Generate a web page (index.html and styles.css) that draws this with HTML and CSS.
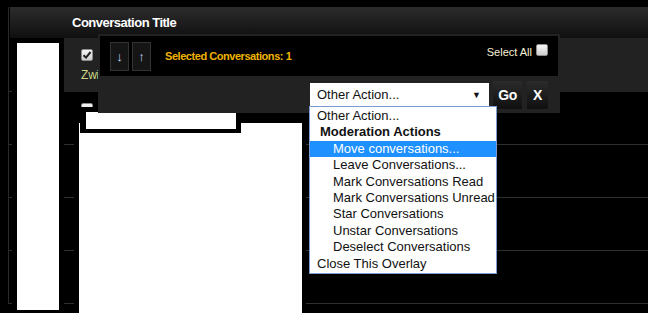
FILE: index.html
```html
<!DOCTYPE html>
<html lang="en">
<head>
    <meta charset="UTF-8">
    <title>Conversations</title>
    <link rel="stylesheet" href="styles.css">
</head>
<body>
    <div class="list">
        <div class="list-head">Conversation Title</div>

        <div class="row row-selected">
            <div class="cell-side"></div>
            <div class="cell-main">
                <span class="check">
                    <svg width="10" height="10" viewBox="0 0 10 10"><path d="M1.5 5.2 L4 7.6 L8.6 2" fill="none" stroke="#222" stroke-width="2"/></svg>
                </span>
                <div class="conv-title">Zwi</div>
            </div>
        </div>
        <div class="row">
            <div class="cell-side"></div>
            <div class="cell-main"><span class="check"></span></div>
        </div>
        <div class="row">
            <div class="cell-side"></div>
            <div class="cell-main"><span class="check"></span></div>
        </div>
        <div class="row">
            <div class="cell-side"></div>
            <div class="cell-main"><span class="check"></span></div>
        </div>
        <div class="row">
            <div class="cell-side"></div>
            <div class="cell-main"><span class="check"></span></div>
        </div>
    </div>

    <!-- redacted parts of the capture -->
    <div class="redact redact-side"></div>
    <div class="redact redact-main"></div>
    <div class="redact redact-bar"></div>

    <!-- inline moderation overlay -->
    <div class="inline-mod">
        <div class="mod-top">
            <button class="sort-btn">&darr;</button>
            <button class="sort-btn">&uarr;</button>
            <span class="mod-count">Selected Conversations: 1</span>
            <label class="select-all">
                <span>Select All</span>
                <span class="check"></span>
            </label>
        </div>
        <div class="mod-bottom">
            <div class="action-select">
                <span>Other Action...</span>
                <span class="caret">&#9660;</span>
            </div>
            <button class="mod-btn">Go</button>
            <button class="mod-btn mod-close">X</button>
        </div>
    </div>

    <div class="action-list">
        <div class="opt">Other Action...</div>
        <div class="opt-group">Moderation Actions</div>
        <div class="opt opt-sub is-active">Move conversations...</div>
        <div class="opt opt-sub">Leave Conversations...</div>
        <div class="opt opt-sub">Mark Conversations Read</div>
        <div class="opt opt-sub">Mark Conversations Unread</div>
        <div class="opt opt-sub">Star Conversations</div>
        <div class="opt opt-sub">Unstar Conversations</div>
        <div class="opt opt-sub">Deselect Conversations</div>
        <div class="opt">Close This Overlay</div>
    </div>
</body>
</html>
```

FILE: styles.css
```css
* {
    margin: 0;
    padding: 0;
    box-sizing: border-box;
}

body {
    font-family: 'Liberation Sans', Arial, sans-serif;
    background-color: #000;
    width: 648px;
    height: 313px;
    overflow: hidden;
    position: relative;
}

button {
    font-family: inherit;
    border: none;
    cursor: pointer;
}

/* Список */
.list {
    margin: 7px 0 0 8px;
    border-left: 1px solid #2a2a2a;
}

.list-head {
    margin-left: 1px;
    height: 31px;
    padding-left: 62px;
    background: linear-gradient(#2c2c2c, #0f0f0f);
    color: #fff;
    font-size: 13px;
    font-weight: bold;
    letter-spacing: -0.5px;
    line-height: 31px;
}

.row {
    display: flex;
    height: 53px;
}

.row-selected {
    height: 54px;
}

.cell-side {
    width: 55px;
    border-bottom: 1px solid #303030;
}

.cell-main {
    flex: 1;
    padding: 11px 0 0 17px;
    border-bottom: 1px solid #303030;
}

.row-selected .cell-main {
    background-color: #222;
    border-color: #222;
}

.check {
    display: flex;
    align-items: center;
    justify-content: center;
    width: 12px;
    height: 12px;
    border: 1px solid #8c8c8c;
    border-radius: 2px;
    background: linear-gradient(#f6f6f6, #cdcdcd);
}

.conv-title {
    margin-top: 7px;
    color: #cdd685;
    font-size: 12px;
    letter-spacing: -0.2px;
}

/* Закрашенные области */
.redact {
    position: absolute;
    background-color: #fff;
    border: 5px solid #000;
}

.redact-side {
    left: 12px;
    top: 38px;
    width: 52px;
    height: 277px;
}

.redact-main {
    left: 74px;
    top: 118px;
    width: 232px;
    height: 200px;
    border-right-width: 4px;
}

.redact-bar {
    left: 80px;
    top: 107px;
    width: 161px;
    height: 26px;
    border-width: 5px 5px 4px 6px;
}

/* Панель модерации */
.inline-mod {
    position: absolute;
    left: 98px;
    top: 34px;
    width: 462px;
    height: 79px;
    padding: 2px 2px 0;
    background-color: #222;
}

.mod-top {
    display: flex;
    align-items: center;
    height: 40px;
    padding: 0 10px;
    background-color: #000;
}

.sort-btn {
    width: 19px;
    height: 29px;
    margin-right: 3px;
    background-color: #151515;
    border: 1px solid #333;
    color: #c9d6ff;
    font-size: 13px;
}

.mod-count {
    margin-left: 11px;
    color: #f0b400;
    font-size: 11px;
    font-weight: bold;
    letter-spacing: -0.45px;
}

.select-all {
    display: flex;
    align-items: flex-start;
    gap: 4px;
    align-self: flex-start;
    margin: 8px 0 0 auto;
    color: #f7f1d4;
    font-size: 11px;
}

.select-all span:first-child {
    margin-top: 2px;
}

.mod-bottom {
    display: flex;
    align-items: center;
    justify-content: flex-end;
    height: 37px;
    padding-right: 10px;
}

.action-select {
    display: flex;
    align-items: center;
    justify-content: space-between;
    width: 179px;
    height: 23px;
    padding: 0 8px 0 7px;
    background-color: #fff;
    color: #111;
    font-size: 13px;
}

.caret {
    font-size: 9px;
}

.mod-btn {
    width: 29px;
    height: 28px;
    margin-left: 4px;
    background: linear-gradient(#2b2b2b, #101010);
    color: #fff;
    font-size: 14px;
    font-weight: bold;
    letter-spacing: -0.5px;
}

.mod-close {
    width: 21px;
    margin-left: 5px;
}

/* Открытый список действий */
.action-list {
    position: absolute;
    left: 309px;
    top: 106px;
    width: 188px;
    padding: 1px 0;
    background-color: #fff;
    border: 1px solid #7b9bd0;
}

.opt,
.opt-group {
    height: 16.4px;
    line-height: 16px;
    padding-left: 7px;
    color: #111;
    font-size: 13px;
    white-space: nowrap;
}

.opt-group {
    padding-left: 10px;
    font-weight: bold;
}

.opt-sub {
    padding-left: 23px;
}

.opt.is-active {
    background-color: #1e90ff;
    color: #fff;
}
```
